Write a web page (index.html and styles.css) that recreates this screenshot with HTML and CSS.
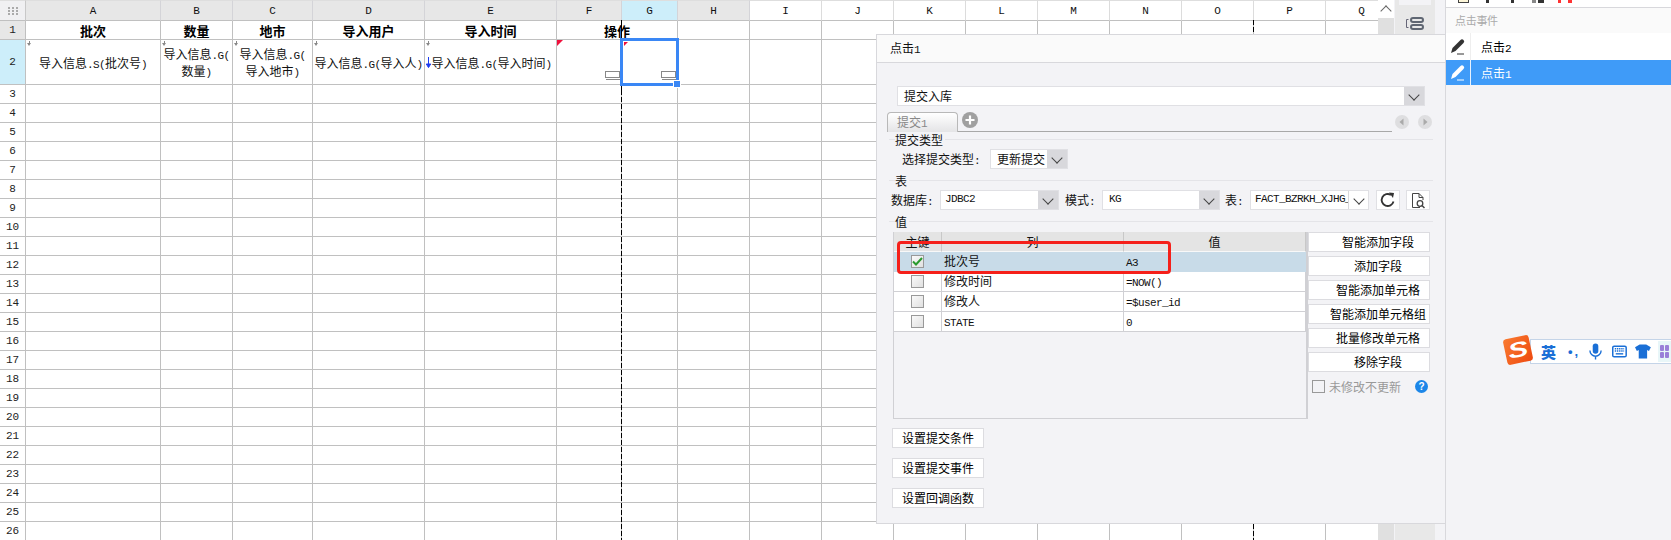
FILE: index.html
```html
<!DOCTYPE html>
<html lang="zh">
<head>
<meta charset="utf-8">
<title>点击1</title>
<link rel="stylesheet" href="styles.css">
</head>
<body>
<div class="app">
  <div class="sheet">
    <table class="grid">
      <colgroup><col class="c-hd"><col class="c-a"><col class="c-b"><col class="c-c"><col class="c-d"><col class="c-e"><col class="c-f"><col class="c-g"><col class="c-n"><col class="c-n"><col class="c-n"><col class="c-n"><col class="c-n"><col class="c-n"><col class="c-n"><col class="c-n"><col class="c-n"><col class="c-n"></colgroup>
      <tr class="r-letters">
        <th class="corner"><svg width="12" height="10" viewBox="0 0 12 10"><path d="M1 1h2v2H1zM5 1h2v2H5zM9 1h2v2H9zM1 4h2v2H1zM5 4h2v2H5zM9 4h2v2H9zM1 7h2v2H1zM5 7h2v2H5zM9 7h2v2H9z" fill="#aaa"/></svg></th>
        <th class="hd">A</th><th class="hd">B</th><th class="hd">C</th><th class="hd">D</th><th class="hd">E</th><th class="hd">F</th><th class="hd on">G</th><th class="hd">H</th>
        <th>I</th><th>J</th><th>K</th><th>L</th><th>M</th><th>N</th><th>O</th><th>P</th><th>Q</th>
      </tr>
      <tr class="r-title">
        <th class="num hd">1</th><td>批次</td><td>数量</td><td>地市</td><td>导入用户</td><td>导入时间</td><td class="to-right"><span class="over">操作</span></td>
        <td></td><td></td><td></td><td></td><td></td><td></td><td></td><td></td><td></td><td></td><td></td>
      </tr>
      <tr class="r-data">
        <th class="num on">2</th>
        <td class="ds"><i class="drop"></i>导入信息<span class="m">.S(</span>批次号<span class="m">)</span></td>
        <td class="ds"><i class="drop"></i>导入信息<span class="m">.G(</span><br>数量<span class="m">)</span></td>
        <td class="ds"><i class="drop"></i>导入信息<span class="m">.G(</span><br>导入地市<span class="m">)</span></td>
        <td class="ds"><i class="drop"></i>导入信息<span class="m">.G(</span>导入人<span class="m">)</span></td>
        <td class="ds ds-sorted"><i class="drop"></i><svg class="down" width="5" height="11" viewBox="0 0 5 11"><path d="M2.500 0v10M0.300 7l2.200 3.600L4.700 7z" stroke="#1c3cf0" fill="#1c3cf0"/></svg>导入信息<span class="m">.G(</span>导入时间<span class="m">)</span></td>
        <td class="ds"><i class="flag"></i><i class="widget"></i></td>
        <td class="ds"><i class="flag small"></i><i class="widget"></i></td>
        <td></td><td></td><td></td><td></td><td></td><td></td><td></td><td></td><td></td><td></td>
      </tr>
      <tr><th class="num">3</th><td></td><td></td><td></td><td></td><td></td><td></td><td></td><td></td><td></td><td></td><td></td><td></td><td></td><td></td><td></td><td></td><td></td></tr>
      <tr><th class="num">4</th><td></td><td></td><td></td><td></td><td></td><td></td><td></td><td></td><td></td><td></td><td></td><td></td><td></td><td></td><td></td><td></td><td></td></tr>
      <tr><th class="num">5</th><td></td><td></td><td></td><td></td><td></td><td></td><td></td><td></td><td></td><td></td><td></td><td></td><td></td><td></td><td></td><td></td><td></td></tr>
      <tr><th class="num">6</th><td></td><td></td><td></td><td></td><td></td><td></td><td></td><td></td><td></td><td></td><td></td><td></td><td></td><td></td><td></td><td></td><td></td></tr>
      <tr><th class="num">7</th><td></td><td></td><td></td><td></td><td></td><td></td><td></td><td></td><td></td><td></td><td></td><td></td><td></td><td></td><td></td><td></td><td></td></tr>
      <tr><th class="num">8</th><td></td><td></td><td></td><td></td><td></td><td></td><td></td><td></td><td></td><td></td><td></td><td></td><td></td><td></td><td></td><td></td><td></td></tr>
      <tr><th class="num">9</th><td></td><td></td><td></td><td></td><td></td><td></td><td></td><td></td><td></td><td></td><td></td><td></td><td></td><td></td><td></td><td></td><td></td></tr>
      <tr><th class="num">10</th><td></td><td></td><td></td><td></td><td></td><td></td><td></td><td></td><td></td><td></td><td></td><td></td><td></td><td></td><td></td><td></td><td></td></tr>
      <tr><th class="num">11</th><td></td><td></td><td></td><td></td><td></td><td></td><td></td><td></td><td></td><td></td><td></td><td></td><td></td><td></td><td></td><td></td><td></td></tr>
      <tr><th class="num">12</th><td></td><td></td><td></td><td></td><td></td><td></td><td></td><td></td><td></td><td></td><td></td><td></td><td></td><td></td><td></td><td></td><td></td></tr>
      <tr><th class="num">13</th><td></td><td></td><td></td><td></td><td></td><td></td><td></td><td></td><td></td><td></td><td></td><td></td><td></td><td></td><td></td><td></td><td></td></tr>
      <tr><th class="num">14</th><td></td><td></td><td></td><td></td><td></td><td></td><td></td><td></td><td></td><td></td><td></td><td></td><td></td><td></td><td></td><td></td><td></td></tr>
      <tr><th class="num">15</th><td></td><td></td><td></td><td></td><td></td><td></td><td></td><td></td><td></td><td></td><td></td><td></td><td></td><td></td><td></td><td></td><td></td></tr>
      <tr><th class="num">16</th><td></td><td></td><td></td><td></td><td></td><td></td><td></td><td></td><td></td><td></td><td></td><td></td><td></td><td></td><td></td><td></td><td></td></tr>
      <tr><th class="num">17</th><td></td><td></td><td></td><td></td><td></td><td></td><td></td><td></td><td></td><td></td><td></td><td></td><td></td><td></td><td></td><td></td><td></td></tr>
      <tr><th class="num">18</th><td></td><td></td><td></td><td></td><td></td><td></td><td></td><td></td><td></td><td></td><td></td><td></td><td></td><td></td><td></td><td></td><td></td></tr>
      <tr><th class="num">19</th><td></td><td></td><td></td><td></td><td></td><td></td><td></td><td></td><td></td><td></td><td></td><td></td><td></td><td></td><td></td><td></td><td></td></tr>
      <tr><th class="num">20</th><td></td><td></td><td></td><td></td><td></td><td></td><td></td><td></td><td></td><td></td><td></td><td></td><td></td><td></td><td></td><td></td><td></td></tr>
      <tr><th class="num">21</th><td></td><td></td><td></td><td></td><td></td><td></td><td></td><td></td><td></td><td></td><td></td><td></td><td></td><td></td><td></td><td></td><td></td></tr>
      <tr><th class="num">22</th><td></td><td></td><td></td><td></td><td></td><td></td><td></td><td></td><td></td><td></td><td></td><td></td><td></td><td></td><td></td><td></td><td></td></tr>
      <tr><th class="num">23</th><td></td><td></td><td></td><td></td><td></td><td></td><td></td><td></td><td></td><td></td><td></td><td></td><td></td><td></td><td></td><td></td><td></td></tr>
      <tr><th class="num">24</th><td></td><td></td><td></td><td></td><td></td><td></td><td></td><td></td><td></td><td></td><td></td><td></td><td></td><td></td><td></td><td></td><td></td></tr>
      <tr><th class="num">25</th><td></td><td></td><td></td><td></td><td></td><td></td><td></td><td></td><td></td><td></td><td></td><td></td><td></td><td></td><td></td><td></td><td></td></tr>
      <tr><th class="num">26</th><td></td><td></td><td></td><td></td><td></td><td></td><td></td><td></td><td></td><td></td><td></td><td></td><td></td><td></td><td></td><td></td><td></td></tr>
    </table>
    <div class="page-break pb-1"></div>
    <div class="page-break pb-2"></div>
    <div class="selection"><i class="handle"></i></div>
  </div>

  <div class="vscroll"><div class="up"></div><div class="track"></div></div>

  <div class="tools">
    <div class="tools-cap"></div>
    <svg class="tools-icon" width="18" height="13" viewBox="0 0 18 13"><path d="M2.500 2.500H.5v8h2" fill="none" stroke="#667" stroke-width="1"/><rect x="5" y="1" width="12" height="4" rx="2" fill="none" stroke="#5f6672" stroke-width="2"/><rect x="5" y="8" width="12" height="4" rx="2" fill="none" stroke="#5f6672" stroke-width="2"/></svg>
  </div>

  <aside class="side">
    <div class="side-tools">
      <i class="t-box"></i><i class="t-dot"></i><i class="t-dot t-dot2"></i><i class="t-dbl"></i><i class="t-red"></i>
    </div>
    <div class="side-title">点击事件</div>
    <div class="ev">
      <span class="ev-icon"><svg width="16" height="17" viewBox="0 0 16 17"><path d="M1 15l1.500-5L10.500 2q1.500-1.500 3 0t0 3L5.500 13z" fill="currentColor"/><path d="M7 16h7" stroke="currentColor" stroke-width="1"/></svg></span>
      <span class="ev-name">点击<span class="m">2</span></span>
    </div>
    <div class="ev active">
      <span class="ev-icon"><svg width="16" height="17" viewBox="0 0 16 17"><path d="M1 15l1.500-5L10.500 2q1.500-1.500 3 0t0 3L5.500 13z" fill="currentColor"/><path d="M7 16h7" stroke="currentColor" stroke-width="1"/></svg></span>
      <span class="ev-name">点击<span class="m">1</span></span>
    </div>
  </aside>

  <section class="dialog">
    <header class="dlg-title">点击<span class="m">1</span></header>
    <div class="dlg-body">
      <div class="combo main-combo"><span>提交入库</span><i class="arrow"></i></div>

      <div class="tabs">
        <div class="tab-strip">
          <span class="tab">提交<span class="m">1</span></span>
          <svg class="plus" width="16" height="16" viewBox="0 0 16 16"><circle cx="8" cy="8" r="8" fill="#a0a0a0"/><path d="M8 3.500v9M3.500 8h9" stroke="#fff" stroke-width="2.200"/></svg>
        </div>
        <svg class="nav" width="14" height="14" viewBox="0 0 14 14"><circle cx="7" cy="7" r="7" fill="#dedee0"/><path d="M8.500 3.500v7L4.500 7z" fill="#aaa"/></svg>
        <svg class="nav nav-next" width="14" height="14" viewBox="0 0 14 14"><circle cx="7" cy="7" r="7" fill="#dedee0"/><path d="M5.500 3.500v7L9.500 7z" fill="#aaa"/></svg>
      </div>

      <div class="legend"><span>提交类型</span></div>
      <div class="row row-type">
        <label class="lbl">选择提交类型<span class="m">:</span></label>
        <div class="combo type-combo"><span>更新提交</span><i class="arrow"></i></div>
      </div>

      <div class="legend"><span>表</span></div>
      <div class="row row-db">
        <label class="lbl">数据库<span class="m">:</span></label>
        <div class="combo db-combo"><span class="m">JDBC2</span><i class="arrow"></i></div>
        <label class="lbl lbl-schema">模式<span class="m">:</span></label>
        <div class="combo schema-combo"><span class="m">KG</span><i class="arrow"></i></div>
        <label class="lbl lbl-table">表<span class="m">:</span></label>
        <div class="combo table-combo"><span class="m">FACT_BZRKH_XJHG_</span><i class="arrow plain"></i></div>
        <button class="icon-btn refresh"><svg width="16" height="16" viewBox="0 0 16 16"><path d="M13.500 9.500A6 6 0 1 1 11 3" fill="none" stroke="#333" stroke-width="1.800"/><path d="M9 .5l5 .5-1 5z" fill="#333"/></svg></button>
        <button class="icon-btn"><svg width="16" height="17" viewBox="0 0 16 17"><path d="M10 15.500H2.500V1.500H9l4 4V8M9 1.500v4h4" fill="none" stroke="#444"/><circle cx="10" cy="11.500" r="2.800" fill="none" stroke="#444" stroke-width="1.300"/><path d="M12 13.500l2.500 2.500" stroke="#444" stroke-width="1.500"/></svg></button>
      </div>

      <div class="legend"><span>值</span></div>
      <div class="values">
        <div class="vt-wrap">
          <table class="vt">
            <colgroup><col class="v1"><col class="v2"><col class="v3"></colgroup>
            <tr class="vh"><th>主键</th><th>列</th><th>值</th></tr>
            <tr class="sel"><td><i class="chk checked"><svg width="11" height="9" viewBox="0 0 11 9"><path d="M1 4.500l3 3 6-6.500" fill="none" stroke="#2a9a2e" stroke-width="2"/></svg></i></td><td>批次号</td><td><span class="m">A3</span></td></tr>
            <tr><td><i class="chk"></i></td><td>修改时间</td><td><span class="m">=NOW()</span></td></tr>
            <tr><td><i class="chk"></i></td><td>修改人</td><td><span class="m">=$user_id</span></td></tr>
            <tr><td><i class="chk"></i></td><td><span class="m">STATE</span></td><td><span class="m">0</span></td></tr>
          </table>
          <div class="annot"></div>
        </div>
        <div class="vbtns">
          <button class="btn">智能添加字段</button>
          <button class="btn">添加字段</button>
          <button class="btn">智能添加单元格</button>
          <button class="btn">智能添加单元格组</button>
          <button class="btn">批量修改单元格</button>
          <button class="btn">移除字段</button>
          <div class="nochange"><i class="chk2"></i><span>未修改不更新</span><b class="help">?</b></div>
        </div>
      </div>

      <div class="bottom-btns">
        <button class="btn plain-btn">设置提交条件</button>
        <button class="btn plain-btn">设置提交事件</button>
        <button class="btn plain-btn">设置回调函数</button>
      </div>
    </div>
  </section>

  <div class="ime">
    <span class="ime-logo"><b>S</b></span>
    <div class="ime-bar">
      <span class="ime-lang">英</span>
      <span class="ime-punct">•,</span>
      <svg width="14" height="18" viewBox="0 0 14 18"><rect x="4" y="0" width="6" height="11" rx="3" fill="#1a6fd6"/><path d="M1 7.500a6 6 0 0 0 12 0M7 14v3" fill="none" stroke="#1a6fd6" stroke-width="1.500"/></svg>
      <svg width="16" height="13" viewBox="0 0 16 13"><rect x=".8" y=".8" width="14.400" height="11.400" rx="1.500" fill="#fff" stroke="#1a6fd6" stroke-width="1.600"/><path d="M3 3.500h10M3 6h10" stroke="#1a6fd6" stroke-width="1.500" stroke-dasharray="1.500 .8"/><path d="M4 9h8" stroke="#1a6fd6" stroke-width="1.500"/></svg>
      <svg width="17" height="15" viewBox="0 0 17 15"><path d="M5 0h7l5 3-2 4-2-1v9H4V6L2 7 0 3z" fill="#1a6fd6"/></svg>
      <span class="ime-apps"><i></i><i></i><i></i><i></i></span>
    </div>
  </div>
</div>
</body>
</html>
```

FILE: styles.css
```css
* { box-sizing: border-box; }
html, body { margin: 0; height: 100%; }
body {
  font-family: "Noto Sans CJK SC", "Liberation Sans", sans-serif;
  font-size: 12px;
  color: #111;
  background: #f3f3f6;
  overflow: hidden;
}
.m {
  font-family: "Liberation Mono", "Noto Sans CJK SC", monospace;
  font-size: 11px;
  line-height: 1;
  letter-spacing: -.6px;
}
.app {
  position: relative;
  display: flex;
  width: 1671px;
  height: 540px;
  overflow: hidden;
}

/* Sheet */
.sheet { position: relative; flex: 0 0 1378px; height: 540px; overflow: hidden; background: #fff; }
.grid { table-layout: fixed; border-collapse: separate; border-spacing: 0; width: 1398px; }
.c-hd { width: 26px; } .c-a { width: 135px; } .c-b { width: 72px; } .c-c { width: 80px; }
.c-d { width: 112px; } .c-e { width: 132px; } .c-f { width: 65px; } .c-g { width: 56px; }
.c-n { width: 72px; }
.grid tr { height: 19px; }
.grid th, .grid td {
  padding: 0;
  border-right: 1px solid #c0c0c0;
  border-bottom: 1px solid #c0c0c0;
  text-align: center;
  overflow: hidden;
  white-space: nowrap;
}
.grid .r-letters { height: 21px; }
.r-letters th {
  font: 400 11px "Liberation Mono", monospace;
  color: #111;
  background: #fff;
  border-top: 1px solid #dedede;
  border-right-color: #dcdcdc;
}
.grid .hd { background: #e7e7e7; border-right-color: #d4d4d8; }
.grid .on { background: #cdeefa; }
.r-letters .corner { background: #f0f0f2; border-right-color: #c8c8c8; }
.corner svg { display: block; margin: 0 auto; }
.r-title td { font-weight: 700; font-size: 13px; line-height: 17px; color: #000; }
.grid .to-right { text-align: right; overflow: visible; }
.over { display: inline-block; margin-right: -9px; position: relative; z-index: 1; }
.r-title .hd { background: #e7e7e7; }
.num { font: 400 11px/17px "Liberation Mono", monospace; color: #222; background: #fff; }
.grid .num { border-right-color: #c0c0c0; }
.grid .r-data { height: 45px; }
.r-data td { line-height: 17px; position: relative; }
.grid .ds-sorted { padding-left: 2px; }
.drop {
  position: absolute; left: 1px; top: 1px; width: 5px; height: 5px;
  background: linear-gradient(#888, #888) center top / 1px 3px no-repeat;
}
.drop::after {
  content: ""; position: absolute; left: 0; top: 2px;
  border: 2.500px solid transparent; border-top: 3px solid #888; border-bottom: 0;
}
.down { position: absolute; left: 1px; top: 17px; }
.flag {
  position: absolute; left: 0; top: 0;
  border-top: 6px solid #f0103c; border-right: 6px solid transparent;
}
.flag.small { left: 2px; top: 2px; border-top-width: 4px; border-right-width: 4px; }
.widget {
  position: absolute; right: 1px; bottom: 6px; width: 15px; height: 7px;
  border: 1px solid #888; background: #fff;
}
.widget::after { content: ""; position: absolute; left: 0; right: -1px; top: 7px; border-top: 1px solid #888; }
.page-break { position: absolute; width: 1px; background: repeating-linear-gradient(#000 0 5px, transparent 5px 7px); }
.pb-1 { left: 621px; top: 20px; bottom: 0; background: linear-gradient(#000 0 70px, transparent 70px), repeating-linear-gradient(#000 0 5px, transparent 5px 7px); }
.pb-2 { left: 1253px; top: 20px; bottom: 0; }
.selection { position: absolute; left: 620px; top: 38px; width: 59px; height: 48px; border: 3px solid #3a87f5; }
.handle { position: absolute; right: -4px; bottom: -4px; width: 6px; height: 6px; background: #3a87f5; outline: 1px solid #fff; }

/* Scroll strip + tool strip */
.vscroll { flex: 0 0 17px; height: 540px; background: #f3f3f6; display: flex; flex-direction: column; padding-right: 1px; }
.up { height: 18px; background: #fff; position: relative; }
.up::after {
  content: ""; position: absolute; left: 4px; top: 7px; width: 7px; height: 7px;
  border-left: 1px solid #666; border-top: 1px solid #666; transform: rotate(45deg);
}
.track { flex: 1; background: #e0e0e0; }
.tools { flex: 0 0 50px; height: 540px; background: linear-gradient(90deg, #e8e8e8 0 40px, #f3f3f6 40px); padding-top: 17px; padding-left: 11px; position: relative; }
.tools-cap { position: absolute; left: 4px; top: 0; width: 32px; height: 5px; background: #f3f3f6; }
.tools-icon { display: block; }

/* Right panel */
.side { flex: 1; height: 540px; border-left: 1px solid #d8d8dc; background: #f3f3f6; }
.side-tools { height: 8px; background: #fff; border-bottom: 1px solid #d8d8dc; display: flex; padding-left: 12px; overflow: hidden; }
.side-tools i { display: block; height: 3px; }
.t-box { width: 11px; border: 1px solid #444; border-top: 0; background: #fdf6d8; }
.t-dot { width: 3px; background: #333; margin-left: 17px; }
.t-dot2 { margin-left: 22px; }
.t-dbl { width: 12px; background: linear-gradient(90deg, #888 0 4px, transparent 4px 6px, #333 6px); margin-left: 18px; }
.t-red { width: 14px; background: linear-gradient(90deg, #f33 0 3px, transparent 3px 10px, #f33 10px); margin-left: 14px; }
.side-title { height: 25px; background: #fafafa; padding-left: 9px; font-size: 11px; line-height: 25px; color: #aaa; letter-spacing: -.3px; }
.ev { height: 27px; background: #fff; display: flex; align-items: center; color: #000; }
.ev + .ev { height: 25px; }
.ev.active { background: #3f9bf8; color: #fff; }
.ev-icon { flex: 0 0 25px; height: 100%; border-right: 1px solid #eee; display: flex; align-items: center; justify-content: center; color: #333; }
.active .ev-icon { color: #fff; border-right-color: #e8f2fe; }
.ev-name { padding-left: 10px; font-size: 12px; }

/* Dialog */
.dialog {
  position: absolute; left: 876px; top: 34px; width: 570px; height: 490px;
  border: 1px solid #d8d8dc; background: #f3f3f6;
}
.dlg-title { height: 28px; background: #fafafa; border-bottom: 1px solid #d8d8dc; padding-left: 13px; font-size: 12px; line-height: 25px; }
.dlg-body { padding: 23px 0 0; position: relative; }
.combo { position: relative; height: 20px; background: #fff; border: 1px solid #e0e0e4; display: flex; align-items: center; padding: 0 20px 2px 6px; white-space: nowrap; overflow: hidden; }
.arrow { position: absolute; right: 0; top: 0; bottom: 0; width: 20px; background: #d8d8dc; }
.arrow.plain { background: #fff; border-left: 1px solid #d8d8dc; }
.arrow::after {
  content: ""; position: absolute; left: 6px; top: 4px; width: 7px; height: 7px;
  border-right: 1px solid #444; border-bottom: 1px solid #444; transform: rotate(45deg);
}
.main-combo { margin-left: 20px; width: 528px; }
.tabs { display: flex; align-items: center; margin: 6px 0 0 10px; height: 20px; }
.tab-strip { flex: 0 0 505px; height: 20px; border-bottom: 1px solid #a8a8a8; display: flex; align-items: flex-start; }
.tab {
  width: 71px; height: 20px; border: 1px solid #b8b8b8; border-bottom: 0; border-radius: 4px 4px 0 0;
  background: linear-gradient(#fff, #e4e4e6); color: #888; padding-left: 9px; line-height: 17px;
}
.tab .m { color: #888; }
.plus { margin: 0 0 0 4px; }
.nav { margin-left: 3px; margin-top: -1px; }
.nav-next { margin-left: 9px; }
.legend { display: flex; align-items: center; height: 14px; margin: 0 12px 0 12px; line-height: 13px; }
.legend::before { content: ""; width: 6px; border-top: 1px solid #e4e4e8; }
.legend::after { content: ""; flex: 1; border-top: 1px solid #e4e4e8; margin-left: 2px; }
.row { display: flex; align-items: center; height: 20px; margin: 3px 0 4px; white-space: nowrap; }
.row-type { padding-left: 25px; }
.type-combo { width: 78px; margin-left: 10px; }
.row-db { padding-left: 14px; }
.lbl { line-height: 18px; }
.db-combo, .schema-combo, .table-combo { width: 119px; padding-left: 4px; }
.db-combo { margin-left: 7px; }
.lbl-schema { margin-left: 6px; }
.schema-combo { margin-left: 7px; width: 118px; padding-left: 6px; }
.lbl-table { margin-left: 5px; }
.table-combo { margin-left: 7px; }
.icon-btn { width: 24px; height: 20px; margin-left: 7px; padding: 0; background: #fff; border: 1px solid #e0e0e4; display: flex; align-items: center; justify-content: center; }
.icon-btn + .icon-btn { margin-left: 6px; }
.values { display: flex; margin: 4px 0 0 16px; align-items: flex-start; }
.vt-wrap { position: relative; width: 415px; height: 187px; border: 1px solid #d0d0d4; border-top: 0; border-right: 2px solid #d0d0d4; }
.vt { table-layout: fixed; border-collapse: separate; border-spacing: 0; width: 100%; }
.v1 { width: 48px; } .v2 { width: 182px; }
.vt tr { height: 20px; }
.vt th { padding: 0; background: #e4e4e4; border-bottom: 1px solid #f8f8f8; font-weight: 400; border-right: 1px solid #c8c8c8; line-height: 16px; }
.vt td { padding: 0 0 1px 2px; background: #fff; border-bottom: 1px solid #d0d0d4; border-right: 1px solid #d0d0d4; line-height: 16px; white-space: nowrap; overflow: hidden; }
.vt td:first-child { padding: 0; }
.vt .sel td { background: #c8dbe8; border-right-color: #c8dbe8; border-bottom-color: #c8dbe8; }
.chk { display: flex; width: 13px; height: 13px; margin: 0 auto; align-items: center; justify-content: center; border: 1px solid #999; background: linear-gradient(135deg, #fafafa, #e0e0e0); }
.annot { position: absolute; left: 3px; top: 9px; width: 274px; height: 33px; border: 3px solid #f5201a; border-radius: 4px; }
.vbtns { display: flex; flex-direction: column; gap: 4px; width: 122px; }
.btn { height: 20px; padding: 0 0 2px 18px; background: #fff; border: 1px solid #dcdce0; font: inherit; line-height: 15px; color: #000; white-space: nowrap; }
.nochange { display: flex; align-items: center; margin-top: 4px; padding-left: 4px; color: #999; line-height: 13px; }
.chk2 { width: 13px; height: 13px; border: 1px solid #999; margin-right: 4px; }
.help { margin-left: 14px; width: 13px; height: 13px; border-radius: 50%; background: #1c86e8; color: #fff; text-align: center; font: 700 10px/13px "Liberation Sans", sans-serif; }
.bottom-btns { display: flex; flex-direction: column; gap: 10px; margin: 9px 0 0 15px; width: 92px; }
.plain-btn { padding: 0 0 2px; }

/* IME bar */
.ime { position: absolute; left: 1503px; top: 335px; width: 168px; height: 32px; }
.ime-logo {
  position: absolute; left: 2px; top: 2px; width: 26px; height: 26px; border-radius: 3px;
  background: linear-gradient(135deg, #f97a30, #ee4a10); transform: rotate(-12deg);
  display: flex; align-items: center; justify-content: center; z-index: 1;
}
.ime-logo b { color: #fff; font: italic 900 24px/26px "Liberation Sans", sans-serif; transform: scale(1.25, .9); }
.ime-bar {
  position: absolute; left: 27px; right: 0; top: 4px; height: 25px; background: #fff;
  border: 1px solid #c4d4e8; border-right: 0; display: flex; align-items: center; color: #1a6fd6;
}
.ime-lang { font-weight: 900; font-size: 15px; margin-left: 10px; }
.ime-punct { font: 700 13px/1 "Liberation Sans", sans-serif; margin-left: 12px; letter-spacing: 2px; }
.ime-bar svg:nth-of-type(1) { margin-left: 9px; }
.ime-bar svg:nth-of-type(2) { margin-left: 10px; }
.ime-bar svg:nth-of-type(3) { margin-left: 8px; }
.ime-apps { display: grid; grid-template-columns: 4px 4px; gap: 1px; padding: 4px 2px; margin-left: 7px; background: #e8f6f8; }
.ime-apps i { width: 4px; height: 6px; background: #9a7fd8; border-radius: 1px; }
```
